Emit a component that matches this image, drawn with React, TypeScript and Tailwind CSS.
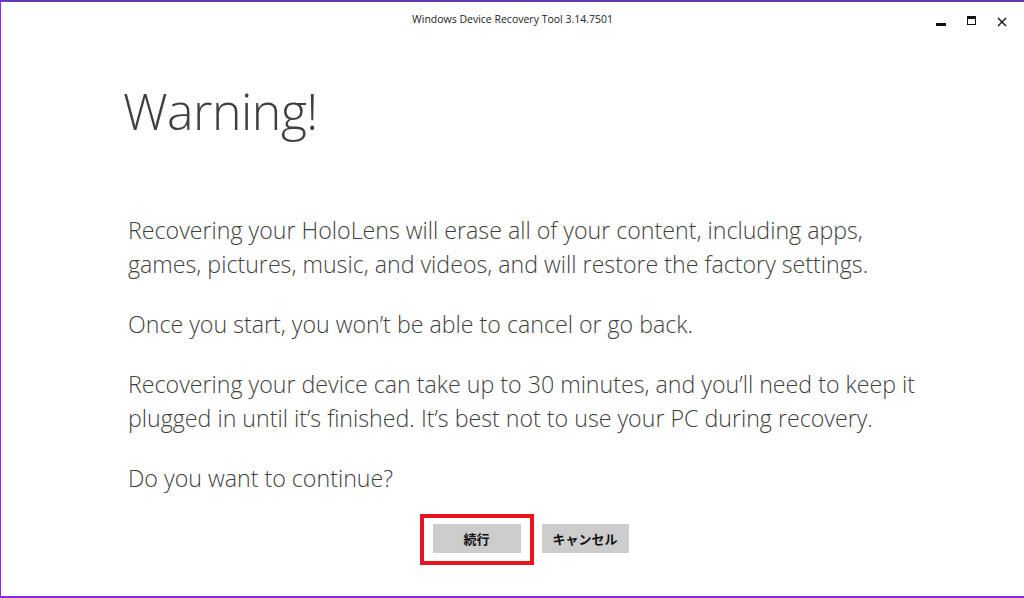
export default function App() {
  return (
    <div className="w-[1024px] h-[598px] bg-white flex flex-col border-t border-t-[#3d4b8c] overflow-hidden">
      <div className="flex-1 flex flex-col border-t border-t-[#8a2be2] border-l border-l-[#8a2be2] border-b-2 border-b-[#8a2be2]">
        {/* title bar */}
        <div className="relative h-[38px] flex items-center justify-center">
          <span className="text-[10.5px] text-[#222] font-['Open_Sans','Liberation_Sans',sans-serif] -mt-[3px]">
            Windows Device Recovery Tool 3.14.7501
          </span>
          <div className="absolute right-[17px] top-[14px] flex items-start gap-[21px]">
            <div className="w-[10px] h-[10px] flex items-end">
              <div className="w-[10px] h-[3px] bg-[#111]" />
            </div>
            <div className="w-[9px] h-[9px] border border-[#111] border-t-[3px]" />
            <svg width="10" height="10" viewBox="0 0 10 10" className="mt-[1px]">
              <path d="M1 1 L9 9 M9 1 L1 9" stroke="#111" strokeWidth="1.4" />
            </svg>
          </div>
        </div>

        <div className="pl-[122px] pr-[30px] font-['Open_Sans','Liberation_Sans',sans-serif] text-[#3f3f3f]">
          <h1 className="text-[50px] font-light leading-none mt-[46px] tracking-[-0.5px]">Warning!</h1>
          <div className="pl-[5px] mt-[77px] text-[23.2px] font-light leading-[34px]">
            <p>
              Recovering your HoloLens will erase all of your content, including apps,
              <br />
              games, pictures, music, and videos, and will restore the factory settings.
            </p>
            <p className="mt-[26px]">Once you start, you won’t be able to cancel or go back.</p>
            <p className="mt-[26px]">
              Recovering your device can take up to 30 minutes, and you’ll need to keep it
              <br />
              plugged in until it’s finished. It’s best not to use your PC during recovery.
            </p>
            <p className="mt-[26px]">Do you want to continue?</p>
          </div>
        </div>

        <div className="flex justify-center items-start gap-[8px] mt-[19px] pl-[23px]">
          <div className="border-[4px] border-[#e8151f] px-[9px] pt-[6px] pb-[8px]">
            <button className="w-[88px] h-[29px] bg-[#cccccc] text-[13px] font-semibold text-[#111] font-['Noto_Sans_CJK_JP',sans-serif]">
              続行
            </button>
          </div>
          <button className="w-[87px] h-[29px] mt-[10px] bg-[#cccccc] text-[13px] font-semibold text-[#111] font-['Noto_Sans_CJK_JP',sans-serif]">
            キャンセル
          </button>
        </div>
      </div>
    </div>
  );
}
